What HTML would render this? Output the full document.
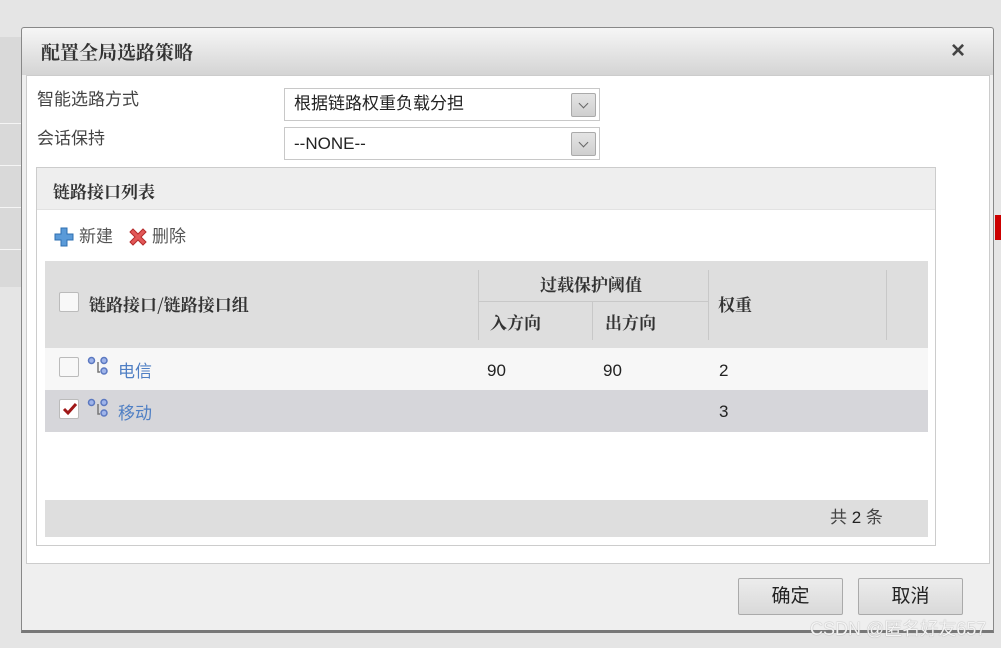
<!DOCTYPE html>
<html><head><meta charset="utf-8"><style>
*{box-sizing:border-box;margin:0;padding:0}
body{width:1001px;height:648px;background:#e5e5e5;position:relative;overflow:hidden;font-family:"Liberation Sans","Noto Sans CJK SC",sans-serif;line-height:1.15}
.a{position:absolute}
.t{font-family:"Noto Serif CJK SC","Liberation Serif",serif;}
.sel{position:absolute;left:284px;width:316px;height:33px;border:1px solid #c8c8c8;background:#fff;font-size:17px;color:#222;padding:5px 0 0 9px}
.arr{position:absolute;right:3px;top:4px;width:25px;height:24px;border:1px solid #aaa;background:linear-gradient(#e4e4e4,#cfcfcf);border-radius:2px}
.arr:after{content:"";position:absolute;left:8px;top:6px;width:6px;height:6px;border-right:1.5px solid #666;border-bottom:1.5px solid #666;transform:rotate(45deg)}
.cb{position:absolute;width:20px;height:20px;border:1px solid #bbb;background:#f8f8f8;border-radius:2px}
.btn{position:absolute;top:578px;width:105px;height:37px;border:1px solid #aaa;background:linear-gradient(#ececec,#d9d9d9);font-size:19px;color:#222;text-align:center;line-height:35px;border-radius:2px}
</style></head><body>
<div class="a" style="left:0;top:37px;width:21px;height:250px;background:#d9d9d9"></div>
<div class="a" style="left:0;top:123px;width:21px;height:1px;background:#f5f5f5"></div>
<div class="a" style="left:0;top:165px;width:21px;height:1px;background:#f5f5f5"></div>
<div class="a" style="left:0;top:207px;width:21px;height:1px;background:#f5f5f5"></div>
<div class="a" style="left:0;top:249px;width:21px;height:1px;background:#f5f5f5"></div>
<div class="a" style="left:995px;top:215px;width:6px;height:25px;background:#c00"></div>
<div class="a" style="left:21px;top:27px;width:973px;height:606px;border:1px solid #888;border-bottom:3px solid #777;background:#efefef;border-radius:3px 3px 0 0"></div>
<div class="a" style="left:22px;top:28px;width:971px;height:47px;background:linear-gradient(#f6f6f6,#d4d4d4);border-radius:3px 3px 0 0"></div>
<div class="a t" style="left:41px;top:41px;font-size:19px;font-weight:bold;color:#333">配置全局选路策略</div>
<div class="a" style="left:951px;top:37px;font-size:24px;font-weight:bold;color:#444">×</div>
<div class="a" style="left:26px;top:75px;width:964px;height:489px;background:#fff;border:1px solid #ccc"></div>
<div class="a" style="left:37px;top:90px;font-size:17px;color:#444">智能选路方式</div>
<div class="a" style="left:37px;top:129px;font-size:17px;color:#444">会话保持</div>
<div class="sel" style="top:88px">根据链路权重负载分担<div class="arr"></div></div>
<div class="sel" style="top:127px;padding-top:6px">--NONE--<div class="arr"></div></div>
<div class="a" style="left:36px;top:167px;width:900px;height:379px;border:1px solid #ccc;background:#fff"></div>
<div class="a" style="left:37px;top:168px;width:898px;height:42px;background:#eee;border-bottom:1px solid #e2e2e2"></div>
<div class="a t" style="left:53px;top:181px;font-size:17px;font-weight:bold;color:#333">链路接口列表</div>
<svg class="a" style="left:53px;top:226px" width="22" height="22"><path d="M8 2h6v6h6v6h-6v6H8v-6H2V8h6z" fill="#5a9ad8" stroke="#2d6fb0"/></svg>
<div class="a" style="left:79px;top:227px;font-size:17px;color:#555">新建</div>
<svg class="a" style="left:127px;top:226px" width="22" height="22"><path d="M3 6l3-3 5 5 5-5 3 3-5 5 5 5-3 3-5-5-5 5-3-3 5-5z" fill="#e25858" stroke="#b52b2b"/></svg>
<div class="a" style="left:152px;top:227px;font-size:17px;color:#555">删除</div>
<div class="a" style="left:45px;top:261px;width:883px;height:87px;background:#dedede"></div>
<div class="a" style="left:478px;top:270px;width:1px;height:70px;background:#c8c8c8"></div>
<div class="a" style="left:708px;top:270px;width:1px;height:70px;background:#c8c8c8"></div>
<div class="a" style="left:886px;top:270px;width:1px;height:70px;background:#c8c8c8"></div>
<div class="a" style="left:479px;top:301px;width:229px;height:1px;background:#c8c8c8"></div>
<div class="a" style="left:592px;top:302px;width:1px;height:38px;background:#c8c8c8"></div>
<div class="cb" style="left:59px;top:292px"></div>
<div class="a t" style="left:89px;top:294px;font-size:17px;font-weight:bold;color:#333">链路接口/链路接口组</div>
<div class="a t" style="left:540px;top:274px;font-size:17px;font-weight:bold;color:#333">过载保护阈值</div>
<div class="a t" style="left:490px;top:312px;font-size:17px;font-weight:bold;color:#333">入方向</div>
<div class="a t" style="left:605px;top:312px;font-size:17px;font-weight:bold;color:#333">出方向</div>
<div class="a t" style="left:718px;top:294px;font-size:17px;font-weight:bold;color:#333">权重</div>
<div class="a" style="left:45px;top:348px;width:883px;height:42px;background:#f7f7f7"></div>
<div class="a" style="left:45px;top:390px;width:883px;height:42px;background:#d6d6da"></div>
<div class="cb" style="left:59px;top:357px"></div>
<div class="cb" style="left:59px;top:399px;background:#fff"></div>
<svg class="a" style="left:61px;top:400px" width="18" height="18"><path d="M3 9l4 4 8-9" fill="none" stroke="#a01818" stroke-width="3"/></svg>
<svg class="a" style="left:87px;top:356px" width="26" height="22"><g fill="#9fb4ea" stroke="#5b78c0" stroke-width="1.5"><circle cx="4.5" cy="4.5" r="3"/><circle cx="17" cy="4.5" r="3"/><circle cx="17" cy="15" r="3"/></g><path d="M11 6v10h2" stroke="#777" fill="none" stroke-width="1.5"/></svg>
<svg class="a" style="left:87px;top:398px" width="26" height="22"><g fill="#9fb4ea" stroke="#5b78c0" stroke-width="1.5"><circle cx="4.5" cy="4.5" r="3"/><circle cx="17" cy="4.5" r="3"/><circle cx="17" cy="15" r="3"/></g><path d="M11 6v10h2" stroke="#777" fill="none" stroke-width="1.5"/></svg>
<div class="a" style="left:118px;top:362px;font-size:17px;color:#4f7fc4">电信</div>
<div class="a" style="left:118px;top:404px;font-size:17px;color:#4f7fc4">移动</div>
<div class="a" style="left:487px;top:361px;font-size:17px;color:#222">90</div>
<div class="a" style="left:603px;top:361px;font-size:17px;color:#222">90</div>
<div class="a" style="left:719px;top:361px;font-size:17px;color:#222">2</div>
<div class="a" style="left:719px;top:402px;font-size:17px;color:#222">3</div>
<div class="a" style="left:45px;top:500px;width:883px;height:37px;background:#dedede"></div>
<div class="a" style="left:830px;top:508px;font-size:17px;color:#444">共 <span style="color:#222">2</span> 条</div>
<div class="btn" style="left:738px">确定</div>
<div class="btn" style="left:858px">取消</div>
<div class="a" style="left:810px;top:619px;font-size:18px;color:#f4f4f4;text-shadow:0 0 1px #888">CSDN @匿名好友657</div>
</body></html>
